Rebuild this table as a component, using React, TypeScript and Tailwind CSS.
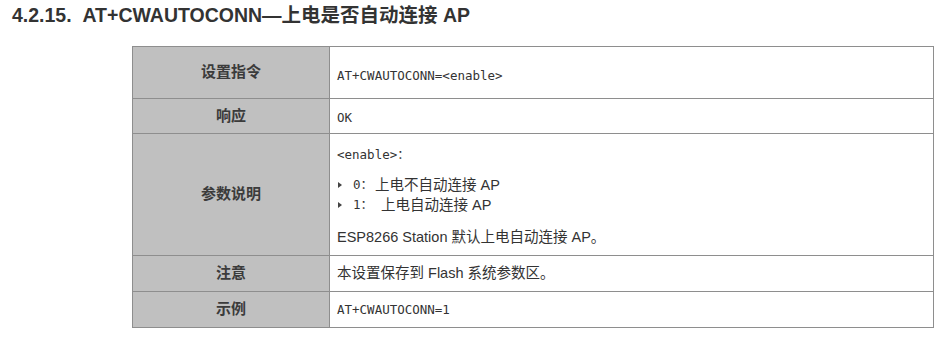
import React from 'react';

const sans = 'font-["Liberation_Sans","Noto_Sans_CJK_SC",sans-serif]';
const mono = 'font-["DejaVu_Sans_Mono","Noto_Sans_CJK_SC",monospace]';

const Label: React.FC<{ children: React.ReactNode }> = ({ children }) => (
    <td className={`w-[197px] border border-[#8e8e8e] bg-[#c0c0c0] text-center align-middle text-[15px] font-bold text-[#3b3b3b] ${sans}`}>
        {children}
    </td>
);

const Bullet = () => (
    <svg width="6" height="8" viewBox="0 0 6 8" className="mr-[10px] shrink-0">
        <path d="M1 1 L5 4 L1 7 Z" fill="#444" />
    </svg>
);

export default function App() {
    return (
        <div className={`w-[951px] h-[345px] bg-white ${sans}`}>
            <h2 className="pl-[12px] pt-[3px] text-[19.5px] leading-[24px] font-bold text-[#333]">
                4.2.15.&nbsp;&nbsp;AT+CWAUTOCONN—上电是否自动连接 AP
            </h2>

            <table className="ml-[132px] mt-[19px] w-[802px] border-collapse border border-[#8e8e8e]">
                <tbody className="text-[#333]">
                    <tr className="h-[52px]">
                        <Label>设置指令</Label>
                        <td className={`border border-[#8e8e8e] pl-[7px] pt-[8px] align-middle text-[12.5px] ${mono}`}>
                            AT+CWAUTOCONN=&lt;enable&gt;
                        </td>
                    </tr>
                    <tr className="h-[35px]">
                        <Label>响应</Label>
                        <td className={`border border-[#8e8e8e] pl-[7px] pt-[5px] align-middle text-[12.5px] ${mono}`}>
                            OK
                        </td>
                    </tr>
                    <tr className="h-[122px]">
                        <Label>参数说明</Label>
                        <td className="border border-[#8e8e8e] pl-[7px] pt-[11px] pb-[8px] align-top">
                            <div className={`leading-[20px] text-[12.5px] ${mono}`}>&lt;enable&gt;：</div>
                            <div className="mt-[10px] flex items-center leading-[20px] text-[14.5px]">
                                <Bullet />
                                <span className={`text-[12.5px] ${mono}`}>0：</span>
                                <span className="pl-[2px]">上电不自动连接 AP</span>
                            </div>
                            <div className="flex items-center leading-[20px] text-[14.5px]">
                                <Bullet />
                                <span className={`text-[12.5px] ${mono}`}>1：</span>
                                <span className="pl-[8px]">上电自动连接 AP</span>
                            </div>
                            <div className="mt-[12px] leading-[20px] text-[14.5px]">
                                ESP8266 Station 默认上电自动连接 AP。
                            </div>
                        </td>
                    </tr>
                    <tr className="h-[36px]">
                        <Label>注意</Label>
                        <td className="border border-[#8e8e8e] pl-[7px] align-middle text-[14.5px]">
                            本设置保存到 Flash 系统参数区。
                        </td>
                    </tr>
                    <tr className="h-[36px]">
                        <Label>示例</Label>
                        <td className={`border border-[#8e8e8e] pl-[7px] pt-[2px] align-middle text-[12.5px] ${mono}`}>
                            AT+CWAUTOCONN=1
                        </td>
                    </tr>
                </tbody>
            </table>
        </div>
    );
}
